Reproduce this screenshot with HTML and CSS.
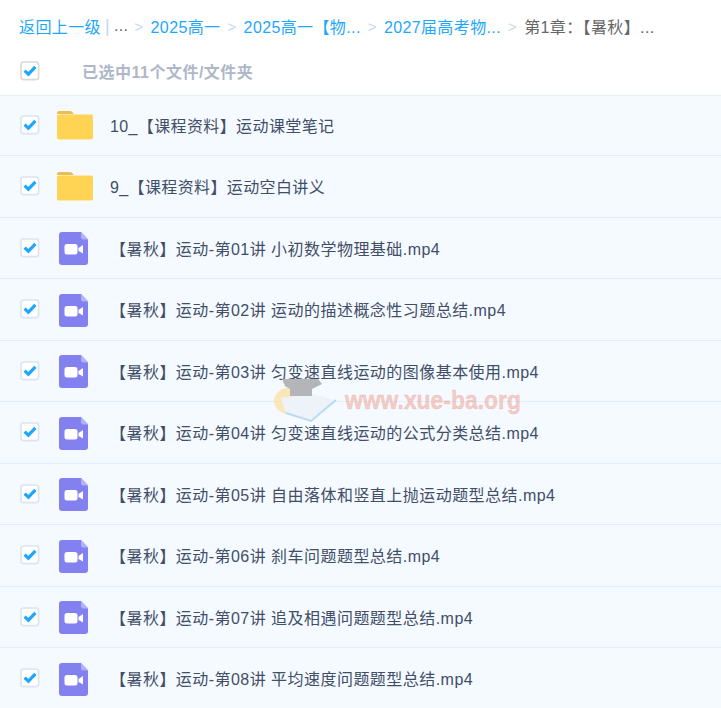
FILE: index.html
```html
<!DOCTYPE html>
<html lang="zh-CN">
<head>
<meta charset="utf-8">
<title>文件列表</title>
<link rel="stylesheet" href="styles.css">
</head>
<body>
<svg class="defs" width="0" height="0" aria-hidden="true">
  <defs>
    <symbol id="check" viewBox="0 0 20 20"><rect x="1" y="1" width="17.6" height="17.6" rx="2.5" fill="#fff" stroke="currentColor" stroke-width="1.6"/><path d="M4.6 9.6l3.8 3.6L15.4 5.8" fill="none" stroke="#1ea7ff" stroke-width="3.2"/></symbol>
    <symbol id="folder" viewBox="0 0 36 30"><path d="M0 3a2 2 0 0 1 2-2h11a4 4 0 0 1 3 2l1 1H0z" fill="#ecbd4f"/><rect y="4.5" width="36" height="25" rx="2" fill="#ffd454"/></symbol>
    <symbol id="video" viewBox="0 0 29 33"><path d="M3 0h19l7 7.5V30a3 3 0 0 1-3 3H3a3 3 0 0 1-3-3V3a3 3 0 0 1 3-3z" fill="#8381f0"/><path d="M22 0l7 7.5h-5a2 2 0 0 1-2-2z" fill="#b2b0f8"/><rect x="5.5" y="12" width="13" height="10.5" rx="2.5" fill="#fff"/><path d="M19.500 16l4.500-3v8.500L19.500 19z" fill="#fff"/></symbol>
  </defs>
</svg>
<nav class="crumbs">
  <a class="link">返回上一级</a><span class="bar">|</span><span class="dots">...</span>
  <span class="sep">&gt;</span><a class="link">2025高一</a>
  <span class="sep">&gt;</span><a class="link">2025高一【物...</a>
  <span class="sep">&gt;</span><a class="link">2027届高考物...</a>
  <span class="sep">&gt;</span><span class="current">第1章：【暑秋】...</span>
</nav>
<div class="selbar">
  <svg class="box head-box"><use href="#check"/></svg>
  <span class="seltext">已选中11个文件/文件夹</span>
</div>
<ul class="list">
  <li class="row row-first"><svg class="box"><use href="#check"/></svg><svg class="folder"><use href="#folder"/></svg><span class="name folder-name">10_【课程资料】运动课堂笔记</span></li>
  <li class="row"><svg class="box"><use href="#check"/></svg><svg class="folder"><use href="#folder"/></svg><span class="name folder-name">9_【课程资料】运动空白讲义</span></li>
  <li class="row"><svg class="box"><use href="#check"/></svg><svg class="video"><use href="#video"/></svg><span class="name">【暑秋】运动-第01讲 小初数学物理基础.mp4</span></li>
  <li class="row"><svg class="box"><use href="#check"/></svg><svg class="video"><use href="#video"/></svg><span class="name">【暑秋】运动-第02讲 运动的描述概念性习题总结.mp4</span></li>
  <li class="row"><svg class="box"><use href="#check"/></svg><svg class="video"><use href="#video"/></svg><span class="name">【暑秋】运动-第03讲 匀变速直线运动的图像基本使用.mp4</span></li>
  <li class="row"><svg class="box"><use href="#check"/></svg><svg class="video"><use href="#video"/></svg><span class="name">【暑秋】运动-第04讲 匀变速直线运动的公式分类总结.mp4</span></li>
  <li class="row"><svg class="box"><use href="#check"/></svg><svg class="video"><use href="#video"/></svg><span class="name">【暑秋】运动-第05讲 自由落体和竖直上抛运动题型总结.mp4</span></li>
  <li class="row"><svg class="box"><use href="#check"/></svg><svg class="video"><use href="#video"/></svg><span class="name">【暑秋】运动-第06讲 刹车问题题型总结.mp4</span></li>
  <li class="row"><svg class="box"><use href="#check"/></svg><svg class="video"><use href="#video"/></svg><span class="name">【暑秋】运动-第07讲 追及相遇问题题型总结.mp4</span></li>
  <li class="row"><svg class="box"><use href="#check"/></svg><svg class="video"><use href="#video"/></svg><span class="name">【暑秋】运动-第08讲 平均速度问题题型总结.mp4</span></li>
</ul>
<div class="watermark">
  <svg class="wm-logo" viewBox="0 0 66 48" aria-hidden="true">
    <ellipse cx="20" cy="25" rx="18" ry="14" fill="#fbe2a8" opacity=".8"/>
    <path d="M9 22L40 18l24 6-25 21-25-8z" fill="#eef3f9"/>
    <path d="M64 24L39 45l-25-8" fill="none" stroke="#b9daf4" stroke-width="2"/>
    <path d="M10 3h36l4 5-10 5v7H18v-7l-5-3z" fill="#b4b5b9"/>
  </svg>
  <span class="wm-text">www.xue-ba.org</span>
</div>
</body>
</html>
```
FILE: styles.css
```css
* { box-sizing: border-box; }
html, body { margin: 0; padding: 0; }
body {
  position: relative;
  height: 708px;
  overflow: hidden;
  background: #fff;
  font-family: "Liberation Sans", "Noto Sans CJK SC", sans-serif;
  font-size: 16px;
  letter-spacing: .38px;
  color: #424e67;
}
.defs { position: absolute; }
.crumbs {
  display: flex;
  align-items: center;
  height: 52px;
  padding-left: 19px;
  white-space: nowrap;
}
.link { color: #1ea7ff; }
.bar { color: #c4d8ee; margin-left: 4px; font-size: 18px; }
.dots { color: #666; margin-left: 4px; }
.sep { color: #c4d8ee; margin: 0 7px; font-size: 15px; }
.dots + .sep { margin-left: 6px; }
.current { color: #666; }
.selbar {
  display: flex;
  align-items: center;
  height: 37px;
  margin-bottom: 6px;
  padding-left: 20px;
}
.box { width: 20px; height: 20px; flex: none; color: #dbe4f0; }
.head-box { color: #d9d9d9; }
.seltext {
  margin-left: 42px;
  color: #afb7c8;
  font-weight: bold;
  letter-spacing: .5px;
}
.list { list-style: none; margin: 0; padding: 0; }
.row {
  display: flex;
  align-items: center;
  height: 61.5px;
  padding-left: 20px;
  background: #f4faff;
  border-top: 1px solid #e2eefb;
}
.row-first { height: 60px; padding-bottom: 2px; }
.folder { width: 36px; height: 30px; margin-left: 17px; flex: none; }
.video { width: 29px; height: 33px; margin: 2px 0 0 19px; flex: none; }
.name { margin-left: 22px; white-space: nowrap; letter-spacing: .46px; }
.folder-name { margin-left: 17px; letter-spacing: .38px; }
.watermark {
  position: absolute;
  left: 272px;
  top: 376px;
  display: flex;
  align-items: center;
  pointer-events: none;
}
.wm-logo { width: 66px; height: 48px; }
.wm-text {
  margin-left: 7px;
  font-family: "Liberation Sans", sans-serif;
  font-weight: bold;
  font-size: 26px;
  transform: scaleX(.88);
  transform-origin: left center;
  letter-spacing: 0;
  -webkit-text-stroke: .6px rgba(240, 140, 120, .35);
  color: rgba(240, 140, 120, .42);
}
```
